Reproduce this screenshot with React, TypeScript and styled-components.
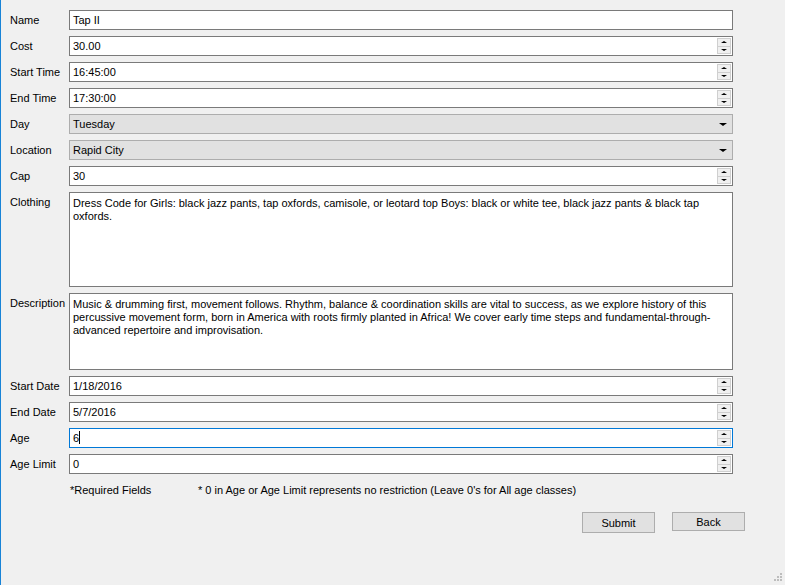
import React from 'react'
import styled, { createGlobalStyle } from 'styled-components'

const GlobalStyle = createGlobalStyle`
  html, body {
    margin: 0;
    padding: 0;
    background: #f0f0f0;
  }
  body {
    font-family: 'Liberation Sans', Arial, sans-serif;
    font-size: 11px;
    color: #000;
  }
`

const Window = styled.div`
  width: 785px;
  height: 585px;
  box-sizing: border-box;
  border-left: 1px solid #1883d7;
  background: #f0f0f0;
  padding: 10px 52px 0 9px;
  position: relative;
  overflow: hidden;
`

const FormGrid = styled.div`
  display: grid;
  grid-template-columns: 59px 1fr;
  row-gap: 6px;
`

const Label = styled.div`
  height: 20px;
  line-height: 20px;
  white-space: nowrap;
`

const Field = styled.div<{ $focused?: boolean }>`
  height: 20px;
  box-sizing: border-box;
  border: 1px solid ${(p) => (p.$focused ? '#0078d7' : '#7a7a7a')};
  background: #fff;
  display: flex;
  align-items: stretch;
`

const FieldText = styled.div`
  flex: 1;
  padding-left: 3px;
  line-height: 18px;
  white-space: nowrap;
  overflow: hidden;
`

const Caret = styled.span`
  display: inline-block;
  width: 1px;
  height: 13px;
  background: #000;
  vertical-align: -2px;
`

const Spin = styled.div`
  width: 14px;
  margin: 1px 1px 1px 0;
  display: flex;
  flex-direction: column;
  border: 1px solid #cfcfcf;
  box-sizing: border-box;
  background: #f0f0f0;
`

const SpinHalf = styled.div<{ $down?: boolean }>`
  flex: 1;
  display: flex;
  align-items: center;
  justify-content: center;
  border-top: ${(p) => (p.$down ? '1px solid #cfcfcf' : 'none')};
`

const Arrow = styled.div<{ $down?: boolean; $size?: number }>`
  width: 0;
  height: 0;
  border-left: ${(p) => p.$size ?? 3}px solid transparent;
  border-right: ${(p) => p.$size ?? 3}px solid transparent;
  ${(p) =>
    p.$down
      ? `border-top: ${(p.$size ?? 3) - 1}px solid #000;`
      : `border-bottom: ${(p.$size ?? 3) - 1}px solid #000;`}
`

const Combo = styled.div`
  height: 20px;
  box-sizing: border-box;
  border: 1px solid #adadad;
  background: #e1e1e1;
  display: flex;
  align-items: center;
  padding: 0 5px 0 3px;
`

const ComboText = styled.div`
  flex: 1;
`

const TextArea = styled.div<{ $height: number }>`
  height: ${(p) => p.$height}px;
  box-sizing: border-box;
  border: 1px solid #7a7a7a;
  background: #fff;
  padding: 4px 3px;
  line-height: 13px;
`

const Line = styled.div`
  white-space: nowrap;
`

const Footer = styled.div`
  display: flex;
  margin: 9px 0 0 60px;
  height: 15px;
  line-height: 15px;
`

const FooterNote = styled.div<{ $width?: number }>`
  width: ${(p) => (p.$width ? `${p.$width}px` : 'auto')};
`

const ButtonRow = styled.div`
  display: flex;
  justify-content: flex-end;
  gap: 17px;
  margin: 14px -12px 0 0;
  align-items: flex-start;
`

const Button = styled.div<{ $tall?: boolean }>`
  width: 73px;
  height: ${(p) => (p.$tall ? 21 : 19)}px;
  box-sizing: border-box;
  border: 1px solid #adadad;
  background: #e1e1e1;
  display: flex;
  align-items: center;
  justify-content: center;
`

const Grip = styled.svg`
  position: absolute;
  right: 3px;
  bottom: 4px;
`

const SpinButtons = () => (
  <Spin>
    <SpinHalf>
      <Arrow />
    </SpinHalf>
    <SpinHalf $down>
      <Arrow $down />
    </SpinHalf>
  </Spin>
)

const SpinField = ({ value, focused }: { value: React.ReactNode; focused?: boolean }) => (
  <Field $focused={focused}>
    <FieldText>{value}</FieldText>
    <SpinButtons />
  </Field>
)

const clothing = [
  'Dress Code for Girls: black jazz pants, tap oxfords, camisole, or leotard top Boys: black or white tee, black jazz pants & black tap',
  'oxfords.',
]

const description = [
  'Music & drumming first, movement follows. Rhythm, balance & coordination skills are vital to success, as we explore history of this',
  'percussive movement form, born in America with roots firmly planted in Africa! We cover early time steps and fundamental-through-',
  'advanced repertoire and improvisation.',
]

export default function App() {
  return (
    <Window>
      <GlobalStyle />
      <FormGrid>
        <Label>Name</Label>
        <Field>
          <FieldText>Tap II</FieldText>
        </Field>
        <Label>Cost</Label>
        <SpinField value="30.00" />
        <Label>Start Time</Label>
        <SpinField value="16:45:00" />
        <Label>End Time</Label>
        <SpinField value="17:30:00" />
        <Label>Day</Label>
        <Combo>
          <ComboText>Tuesday</ComboText>
          <Arrow $down $size={4} />
        </Combo>
        <Label>Location</Label>
        <Combo>
          <ComboText>Rapid City</ComboText>
          <Arrow $down $size={4} />
        </Combo>
        <Label>Cap</Label>
        <SpinField value="30" />
        <Label>Clothing</Label>
        <TextArea $height={95}>
          {clothing.map((l) => (
            <Line key={l}>{l}</Line>
          ))}
        </TextArea>
        <Label>Description</Label>
        <TextArea $height={77}>
          {description.map((l) => (
            <Line key={l}>{l}</Line>
          ))}
        </TextArea>
        <Label>Start Date</Label>
        <SpinField value="1/18/2016" />
        <Label>End Date</Label>
        <SpinField value="5/7/2016" />
        <Label>Age</Label>
        <SpinField
          focused
          value={
            <>
              6<Caret />
            </>
          }
        />
        <Label>Age Limit</Label>
        <SpinField value="0" />
      </FormGrid>
      <Footer>
        <FooterNote $width={128}>*Required Fields</FooterNote>
        <FooterNote>* 0 in Age or Age Limit represents no restriction (Leave 0's for All age classes)</FooterNote>
      </Footer>
      <ButtonRow>
        <Button $tall>Submit</Button>
        <Button>Back</Button>
      </ButtonRow>
      <Grip width="10" height="10" viewBox="0 0 10 10">
        {[
          [8, 0],
          [8, 3],
          [5, 3],
          [8, 6],
          [5, 6],
          [2, 6],
        ].map(([x, y]) => (
          <rect key={`${x}-${y}`} x={x} y={y + 2} width="2" height="2" fill="#bdbdbd" />
        ))}
      </Grip>
    </Window>
  )
}
